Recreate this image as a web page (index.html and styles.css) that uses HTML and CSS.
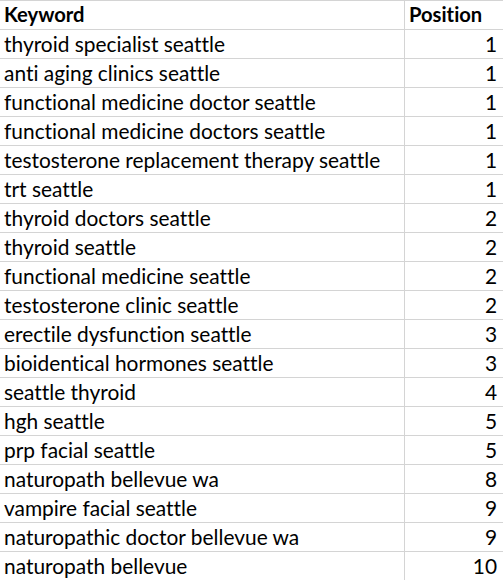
FILE: index.html
```html
<!DOCTYPE html>
<html>
<head>
<meta charset="utf-8">
<link rel="stylesheet" href="styles.css">
</head>
<body>
<div class="sheet">
<div class="cell kw head">Keyword</div><div class="cell pos head">Position</div>
<div class="cell kw">thyroid specialist seattle</div><div class="cell num">1</div>
<div class="cell kw">anti aging clinics seattle</div><div class="cell num">1</div>
<div class="cell kw">functional medicine doctor seattle</div><div class="cell num">1</div>
<div class="cell kw">functional medicine doctors seattle</div><div class="cell num">1</div>
<div class="cell kw">testosterone replacement therapy seattle</div><div class="cell num">1</div>
<div class="cell kw">trt seattle</div><div class="cell num">1</div>
<div class="cell kw">thyroid doctors seattle</div><div class="cell num">2</div>
<div class="cell kw">thyroid seattle</div><div class="cell num">2</div>
<div class="cell kw">functional medicine seattle</div><div class="cell num">2</div>
<div class="cell kw">testosterone clinic seattle</div><div class="cell num">2</div>
<div class="cell kw">erectile dysfunction seattle</div><div class="cell num">3</div>
<div class="cell kw">bioidentical hormones seattle</div><div class="cell num">3</div>
<div class="cell kw">seattle thyroid</div><div class="cell num">4</div>
<div class="cell kw">hgh seattle</div><div class="cell num">5</div>
<div class="cell kw">prp facial seattle</div><div class="cell num">5</div>
<div class="cell kw">naturopath bellevue wa</div><div class="cell num">8</div>
<div class="cell kw">vampire facial seattle</div><div class="cell num">9</div>
<div class="cell kw">naturopathic doctor bellevue wa</div><div class="cell num">9</div>
<div class="cell kw">naturopath bellevue</div><div class="cell num">10</div>
</div>
</body>
</html>
```
FILE: styles.css
```css
html, body {
  margin: 0;
  padding: 0;
  background: #ffffff;
}
.sheet {
  display: grid;
  grid-template-columns: 405px 98px;
  grid-auto-rows: 29px;
  font-family: Lato, "Open Sans", sans-serif;
  font-size: 20.9px;
  font-variant-ligatures: none;
  color: #000000;
}
.cell {
  border-top: 1px solid #d4d4d4;
  line-height: 28px;
  white-space: nowrap;
  overflow: hidden;
}
.kw {
  border-right: 1px solid #d4d4d4;
  padding-left: 4px;
}
.head {
  font-weight: bold;
  font-size: 20.2px;
  line-height: 26px;
}
.pos {
  padding-left: 4px;
}
.num {
  text-align: right;
  padding-right: 6px;
}
```
